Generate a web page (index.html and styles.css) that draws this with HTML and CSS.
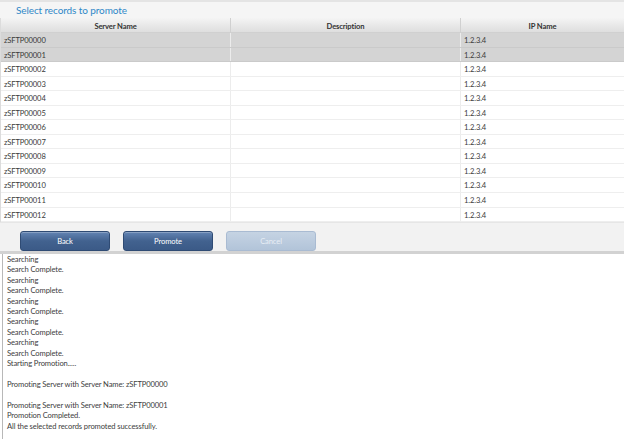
FILE: index.html
```html
<!DOCTYPE html>
<html lang="en">
<head>
    <meta charset="UTF-8">
    <title>Select records to promote</title>
    <link rel="stylesheet" href="styles.css">
</head>
<body>
    <div class="promote-panel">
        <div class="title-bar">Select records to promote</div>

        <div class="grid">
            <div class="grid-row grid-head">
                <div class="cell col-name">Server Name</div>
                <div class="cell col-desc">Description</div>
                <div class="cell col-ip">IP Name</div>
            </div>
            <div class="grid-body" id="grid-body"></div>
        </div>

        <div class="button-bar">
            <button class="action-btn">Back</button>
            <button class="action-btn">Promote</button>
            <button class="action-btn disabled" disabled>Cancel</button>
        </div>

        <div class="log-area">
            <div class="log-line">Searching</div>
            <div class="log-line">Search Complete.</div>
            <div class="log-line">Searching</div>
            <div class="log-line">Search Complete.</div>
            <div class="log-line">Searching</div>
            <div class="log-line">Search Complete.</div>
            <div class="log-line">Searching</div>
            <div class="log-line">Search Complete.</div>
            <div class="log-line">Searching</div>
            <div class="log-line">Search Complete.</div>
            <div class="log-line">Starting Promotion.....</div>
            <div class="log-line">&nbsp;</div>
            <div class="log-line">Promoting Server with Server Name: zSFTP00000</div>
            <div class="log-line">&nbsp;</div>
            <div class="log-line">Promoting Server with Server Name: zSFTP00001</div>
            <div class="log-line">Promotion Completed.</div>
            <div class="log-line">All the selected records promoted successfully.</div>
        </div>
    </div>

    <script>
        // 서버 목록 채우기
        const body = document.getElementById('grid-body');
        for (let i = 0; i <= 12; i++) {
            const row = document.createElement('div');
            row.className = 'grid-row' + (i < 2 ? ' selected' : '');
            const name = 'zSFTP' + String(i).padStart(5, '0');
            row.innerHTML =
                '<div class="cell col-name">' + name + '</div>' +
                '<div class="cell col-desc"></div>' +
                '<div class="cell col-ip">1.2.3.4</div>';
            body.appendChild(row);
        }
    </script>
</body>
</html>
```

FILE: styles.css
```css
* {
    margin: 0;
    padding: 0;
    box-sizing: border-box;
}

body {
    font-family: Lato, 'Open Sans', sans-serif;
    font-size: 7.6px;
    letter-spacing: -0.12px;
    color: #3a3a3a;
    background: #ffffff;
    width: 624px;
    height: 439px;
    overflow: hidden;
}

.promote-panel {
    display: flex;
    flex-direction: column;
    height: 100%;
    border-top: 2px solid #e4e4e4;
}

.title-bar {
    height: 16px;
    background: #f5f5f5;
    color: #2f88c8;
    font-size: 10px;
    letter-spacing: -0.1px;
    line-height: 16px;
    padding-left: 16px;
}

/* 그리드 */
.grid {
    border-left: 1px solid #dcdcdc;
}

.grid-row {
    display: flex;
    height: 14.55px;
    border-bottom: 1px solid #eeeeee;
    background: #ffffff;
}

.grid-row.selected {
    background: #d4d4d4;
    border-bottom-color: #cacaca;
}

.grid-head {
    height: 15px;
    background: linear-gradient(#f4f4f4, #dedede);
    border-bottom: 1px solid #d0d0d0;
    font-weight: 700;
    color: #333333;
}

.cell {
    padding-top: 1px;
    line-height: 13.5px;
    white-space: nowrap;
    overflow: hidden;
}

.col-name {
    width: 230px;
    padding-left: 3px;
    border-right: 1px solid #e4e4e4;
}

.col-desc {
    width: 230px;
    border-right: 1px solid #e4e4e4;
}

.col-ip {
    flex: 1;
    padding-left: 3px;
}

.grid-head .cell {
    text-align: center;
    line-height: 14px;
    padding-left: 0;
    border-right-color: #d0d0d0;
}

.grid-body .col-desc,
.grid-body .col-name {
    border-right-color: #ececec;
}

.grid-body {
    height: 189px;
}

/* 버튼 바 */
.button-bar {
    display: flex;
    gap: 13px;
    padding: 8px 0 0 20px;
    height: 32px;
    background: #f2f2f2;
    border-top: 1px solid #e6e6e6;
    border-bottom: 3px solid #d2d2d2;
}

.action-btn {
    width: 90px;
    height: 20px;
    font-family: inherit;
    font-size: 7.6px;
    letter-spacing: -0.12px;
    color: #ffffff;
    border: 1px solid #2f4b74;
    border-radius: 3px;
    background: linear-gradient(#6384b3, #42628f 50%, #3b5a87);
    box-shadow: inset 0 1px 0 rgba(255, 255, 255, 0.25);
}

.action-btn.disabled {
    color: #e8eef5;
    border-color: #a9bbd2;
    background: linear-gradient(#c5d3e3, #b2c4d9);
    box-shadow: none;
}

/* 로그 영역 */
.log-area {
    flex: 1;
    margin-left: 2px;
    border-left: 1px solid #b8b8b8;
    padding: 0 0 0 4px;
    line-height: 10.4px;
    color: #404040;
}

.log-line {
    white-space: nowrap;
}
```
